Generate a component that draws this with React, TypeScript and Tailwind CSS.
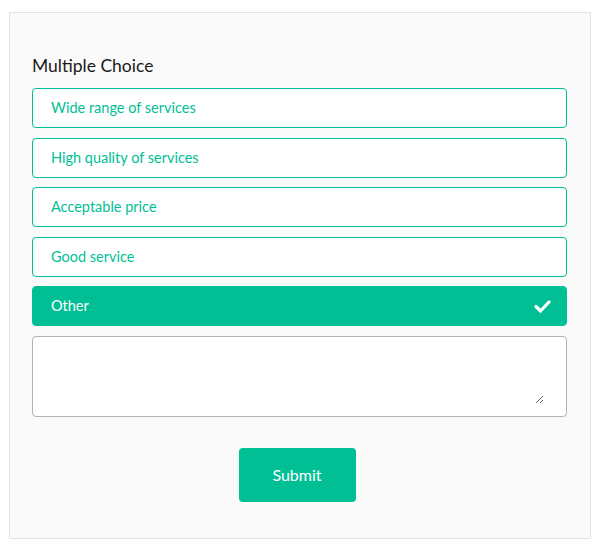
import { useState } from "react";

const OPTIONS = [
  "Wide range of services",
  "High quality of services",
  "Acceptable price",
  "Good service",
  "Other",
];

export default function App() {
  const [selected, setSelected] = useState<string[]>(["Other"]);
  const [other, setOther] = useState("");

  function toggle(opt: string) {
    setSelected((s) => (s.includes(opt) ? s.filter((x) => x !== opt) : [...s, opt]));
  }

  return (
    <div className="min-h-[551px] bg-white pl-[9px] pr-[10px] pt-[12px] font-['Lato',sans-serif]">
      <div className="h-[527px] border border-[#e3e3e3] bg-[#fafafa] pl-[22px] pr-[23px] pt-[40px]">
        <h2 className="text-[17.5px] leading-[25px] text-[#1a1a1a]">Multiple Choice</h2>
        <div className="mt-[10px] flex flex-col gap-[9.5px]">
          {OPTIONS.map((opt) => {
            const on = selected.includes(opt);
            return (
              <button
                key={opt}
                onClick={() => toggle(opt)}
                className={
                  on
                    ? "flex h-[40px] items-center justify-between rounded-[4px] border border-[#00bf95] bg-[#00bf95] pl-[18px] pr-[15px] text-left text-[14.5px] text-white"
                    : "flex h-[40px] items-center justify-between rounded-[4px] border border-[#00bf95] bg-white pl-[18px] pr-[15px] text-left text-[14.5px] text-[#00bf95]"
                }
              >
                <span>{opt}</span>
                {on && (
                  <svg width="17" height="13" viewBox="0 0 17 13" fill="none">
                    <path d="M2 6.5 L6.5 11 L15 2" stroke="white" strokeWidth="3.2" strokeLinecap="round" strokeLinejoin="round" />
                  </svg>
                )}
              </button>
            );
          })}
          <div className="flex h-[81px] rounded-[4px] border border-[#b3b3b3] bg-white pb-[12px] pr-[22px]">
            <textarea
              value={other}
              onChange={(e) => setOther(e.target.value)}
              className="flex-1 bg-transparent px-3 py-2 text-[15px] outline-none"
            />
          </div>
        </div>
        <div className="mt-[31px] flex justify-center pr-[5px]">
          <button className="h-[54px] w-[117px] rounded-[4px] bg-[#00bf95] text-[16px] text-white">
            Submit
          </button>
        </div>
      </div>
    </div>
  );
}
